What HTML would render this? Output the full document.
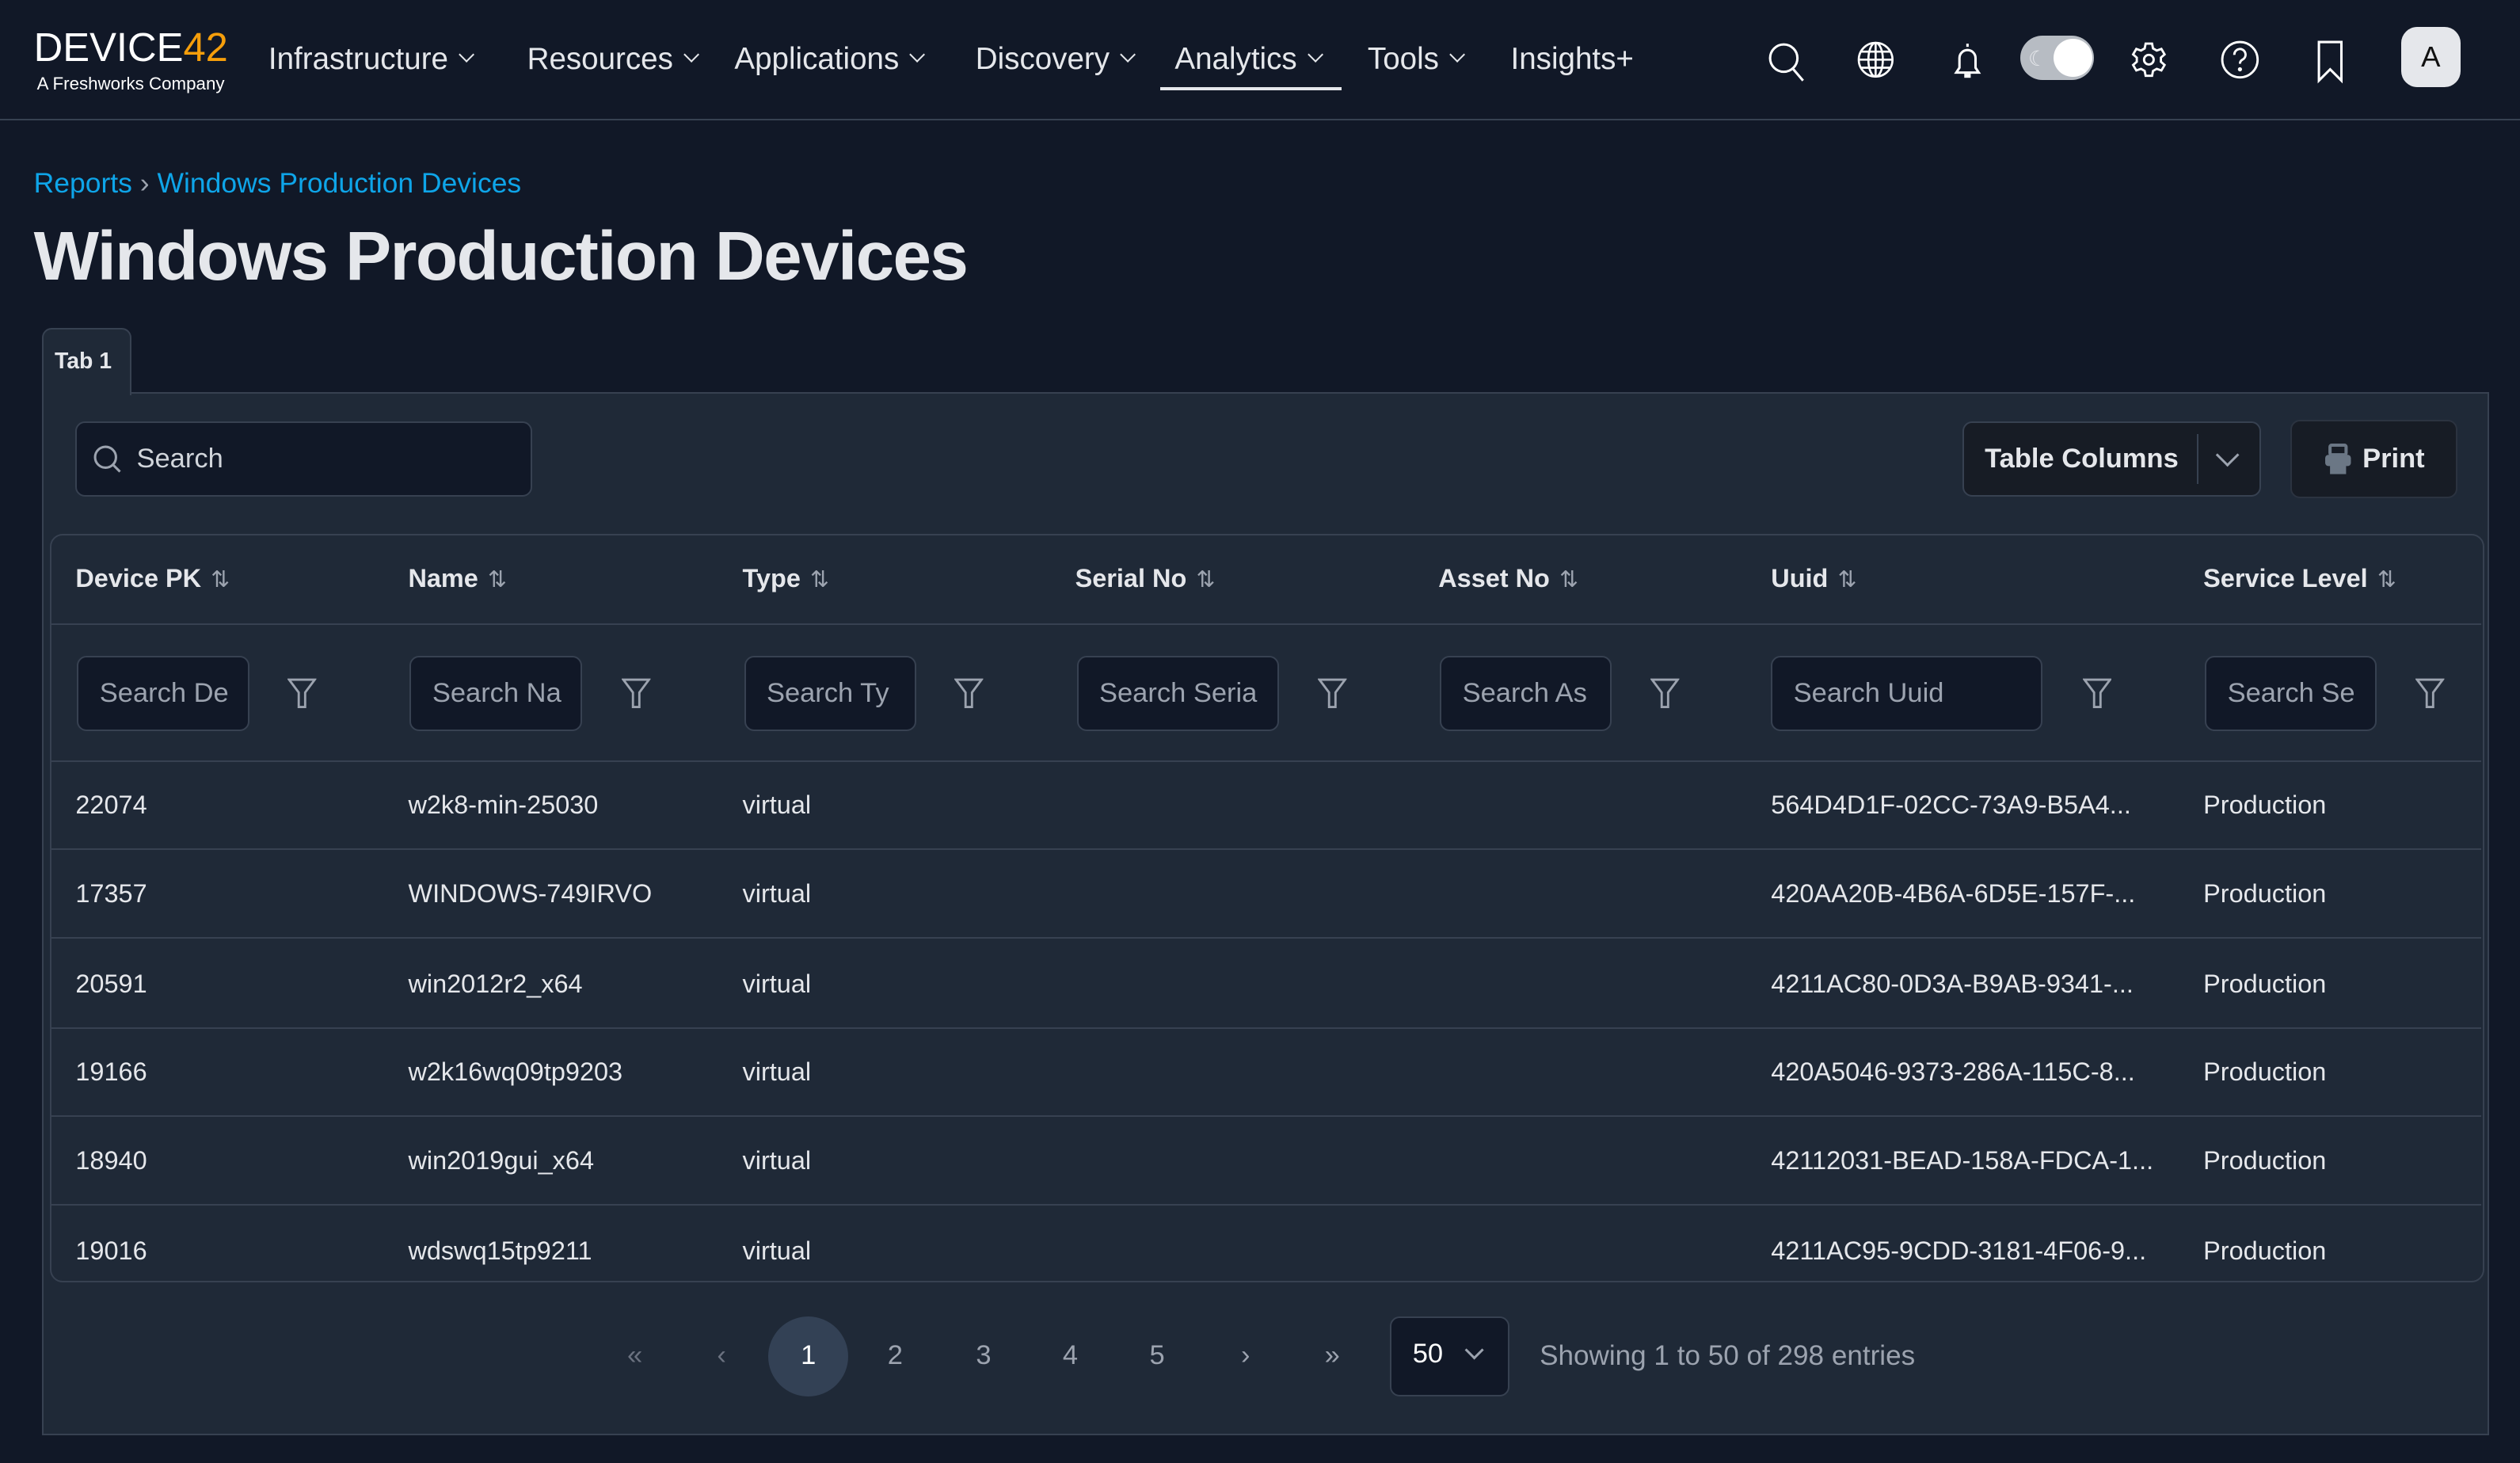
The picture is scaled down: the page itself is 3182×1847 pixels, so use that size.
<!DOCTYPE html>
<html><head><meta charset="utf-8">
<style>
html,body{margin:0;padding:0;background:#111827;overflow:hidden}
#w{zoom:2.0293;width:1568px;height:910px;position:relative;font-family:"Liberation Sans",sans-serif;color:#e5e7eb}
.a{position:absolute}
.nav{font-size:19px;color:#e5e7eb;top:26px;white-space:nowrap}
.chev{display:inline-block;width:6px;height:6px;border-right:1.4px solid #e5e7eb;border-bottom:1.4px solid #e5e7eb;transform:rotate(45deg);margin-left:8px;position:relative;top:-5px}
.inp{background:#111827;border:1px solid #374151;border-radius:6px;box-sizing:border-box}
.th{font-size:16px;font-weight:bold;color:#e5e7eb;top:351px}
.srt{font-weight:normal;color:#9ca3af;font-size:14px;margin-left:6px}
.fi{height:47px;top:408px;font-size:17px;color:#9ca3af;padding:13px 0 0 13px;overflow:hidden;white-space:nowrap}
.hl{left:32px;width:1512px;height:1px;background:#374151}
.td{font-size:16px;color:#e5e7eb;margin-top:1px}
.pg{font-size:17px;color:#9ca3af;top:834px;width:20px;text-align:center}
</style></head><body><div id="w">
<!-- header -->
<div class="a" style="left:21px;top:15px;font-size:25px;letter-spacing:0;color:#fff;font-weight:normal">DEVICE<span style="color:#f59e0b">42</span></div>
<div class="a" style="left:23px;top:46px;font-size:11px;color:#fff">A Freshworks Company</div>
<div class="a nav" style="left:167px">Infrastructure<span class="chev"></span></div>
<div class="a nav" style="left:328px">Resources<span class="chev"></span></div>
<div class="a nav" style="left:457px">Applications<span class="chev"></span></div>
<div class="a nav" style="left:607px">Discovery<span class="chev"></span></div>
<div class="a nav" style="left:731px">Analytics<span class="chev"></span></div>
<div class="a" style="left:722px;top:54px;width:113px;height:2px;background:#e5e7eb"></div>
<div class="a nav" style="left:851px">Tools<span class="chev"></span></div>
<div class="a nav" style="left:940px">Insights+</div>
<svg class="a" style="left:1098px;top:24px" width="28" height="28" viewBox="0 0 28 28" fill="none" stroke="#fff" stroke-width="1.5"><circle cx="12" cy="12" r="8.5"/><path d="M18 19l6 7"/></svg>
<svg class="a" style="left:1155px;top:25px" width="24" height="24" viewBox="0 0 24 24" fill="none" stroke="#fff" stroke-width="1.3"><circle cx="12" cy="12" r="10.5"/><ellipse cx="12" cy="12" rx="4.5" ry="10.5"/><path d="M1.5 12h21M3 7h18M3 17h18M12 1.5v21"/></svg>
<svg class="a" style="left:1212px;top:24px" width="24" height="28" viewBox="0 0 24 28" fill="none" stroke="#fff" stroke-width="1.5"><path d="M12 3v2M5 21h14l-2-3v-6a5 5 0 0 0-10 0v6z"/><path d="M10 23h4" stroke-width="2.5"/></svg>
<div class="a" style="left:1257px;top:22px;width:46px;height:28px;border-radius:14px;background:#b7bcc3"></div>
<div class="a" style="left:1278px;top:24px;width:24px;height:24px;border-radius:12px;background:#fff"></div>
<div class="a" style="left:1262px;top:29px;font-size:13px;color:#e5e7eb">☾</div>
<svg class="a" style="left:1325px;top:25px" width="24" height="24" viewBox="0 0 24 24" fill="none" stroke="#fff" stroke-width="1.4"><circle cx="12" cy="12" r="3"/><path d="M10 2h4l.6 3 2.3 1.3 2.9-1 2 3.4-2.3 2v2.6l2.3 2-2 3.4-2.9-1L14.6 19 14 22h-4l-.6-3-2.3-1.3-2.9 1-2-3.4 2.3-2v-2.6l-2.3-2 2-3.4 2.9 1L9.4 5z"/></svg>
<svg class="a" style="left:1381px;top:24px" width="26" height="26" viewBox="0 0 26 26" fill="none" stroke="#fff" stroke-width="1.4"><circle cx="13" cy="13" r="11"/><path d="M9.5 10a3.5 3.5 0 1 1 5 3c-1 .6-1.5 1.3-1.5 2.5"/><circle cx="13" cy="19" r=".6" fill="#fff"/></svg>
<svg class="a" style="left:1440px;top:24px" width="20" height="28" viewBox="0 0 20 28" fill="none" stroke="#fff" stroke-width="1.5"><path d="M3 2h14v24l-7-7-7 7z"/></svg>
<div class="a" style="left:1494px;top:17px;width:37px;height:37px;border-radius:10px;background:#e5e7eb;color:#111;font-size:18px;text-align:center;line-height:37px">A</div>
<div class="a" style="left:0;top:74px;width:1568px;height:1px;background:#374151"></div>
<!-- title -->
<div class="a" style="left:21px;top:104px;font-size:17.5px;color:#0ea5e9">Reports <span style="color:#9ca3af">›</span> Windows Production Devices</div>
<div class="a" style="left:21px;top:135px;font-size:43px;font-weight:bold;color:#e5e7eb;letter-spacing:-0.8px">Windows Production Devices</div>
<!-- panel -->
<div class="a" style="left:26px;top:244px;width:1521px;height:647px;background:#1f2937;border:1px solid #374151"></div>
<div class="a" style="left:26px;top:204px;width:56px;height:42px;background:#1f2937;border:1px solid #374151;border-bottom:none;border-radius:6px 6px 0 0;font-size:14px;font-weight:bold;padding:12px 0 0 7px;box-sizing:border-box">Tab 1</div>
<div class="a inp" style="left:47px;top:262px;width:284px;height:47px"></div>
<svg class="a" style="left:57px;top:276px" width="20" height="20" viewBox="0 0 20 20" fill="none" stroke="#9ca3af" stroke-width="1.5"><circle cx="8.5" cy="8.5" r="6.5"/><path d="M13.5 13.5l4 4"/></svg>
<div class="a" style="left:85px;top:276px;font-size:17px;color:#d1d5db">Search</div>
<div class="a" style="left:1221px;top:262px;width:186px;height:47px;background:#171c25;border:1px solid #374151;border-radius:6px;box-sizing:border-box"></div>
<div class="a" style="left:1235px;top:276px;font-size:17px;font-weight:bold;color:#e5e7eb">Table Columns</div>
<div class="a" style="left:1367px;top:270px;width:1px;height:31px;background:#374151"></div>
<div class="a" style="left:1381px;top:278px;width:9px;height:9px;border-right:1.5px solid #9ca3af;border-bottom:1.5px solid #9ca3af;transform:rotate(45deg)"></div>
<div class="a" style="left:1425px;top:261px;width:104px;height:49px;background:#171c25;border:1px solid #2b3340;border-radius:6px;box-sizing:border-box"></div>
<svg class="a" style="left:1446px;top:276px" width="18" height="20" viewBox="0 0 18 20" fill="#6b7785"><rect x="4" y="1" width="10" height="6" rx="1" fill="none" stroke="#6b7785" stroke-width="2"/><rect x="1" y="7" width="16" height="7" rx="2"/><rect x="4" y="12" width="10" height="7"/></svg>
<div class="a" style="left:1470px;top:276px;font-size:17px;font-weight:bold;color:#e5e7eb">Print</div>
<!-- table -->
<div class="a" style="left:31px;top:332px;width:1513px;height:464px;border:1px solid #374151;border-radius:8px"></div>
<div class="a th" style="left:47px">Device PK<span class="srt">⇅</span></div>
<div class="a th" style="left:254px">Name<span class="srt">⇅</span></div>
<div class="a th" style="left:462px">Type<span class="srt">⇅</span></div>
<div class="a th" style="left:669px">Serial No<span class="srt">⇅</span></div>
<div class="a th" style="left:895px">Asset No<span class="srt">⇅</span></div>
<div class="a th" style="left:1102px">Uuid<span class="srt">⇅</span></div>
<div class="a th" style="left:1371px">Service Level<span class="srt">⇅</span></div>
<div class="a hl" style="top:388px"></div>
<div class="a inp fi" style="left:48px;width:107px">Search De</div>
<div class="a inp fi" style="left:255px;width:107px">Search Na</div>
<div class="a inp fi" style="left:463px;width:107px">Search Ty</div>
<div class="a inp fi" style="left:670px;width:126px">Search Seria</div>
<div class="a inp fi" style="left:896px;width:107px">Search As</div>
<div class="a inp fi" style="left:1102px;width:169px">Search Uuid</div>
<div class="a inp fi" style="left:1372px;width:107px">Search Se</div>
<svg width="0" height="0" style="position:absolute"><defs><symbol id="f" viewBox="0 0 18 20"><path d="M1 1h16l-6 8v9H7V9z" fill="none" stroke="#9ca3af" stroke-width="1.4"/></symbol></defs></svg>
<svg class="a" style="left:179px;top:422px" width="18" height="20"><use href="#f"/></svg>
<svg class="a" style="left:387px;top:422px" width="18" height="20"><use href="#f"/></svg>
<svg class="a" style="left:594px;top:422px" width="18" height="20"><use href="#f"/></svg>
<svg class="a" style="left:820px;top:422px" width="18" height="20"><use href="#f"/></svg>
<svg class="a" style="left:1027px;top:422px" width="18" height="20"><use href="#f"/></svg>
<svg class="a" style="left:1296px;top:422px" width="18" height="20"><use href="#f"/></svg>
<svg class="a" style="left:1503px;top:422px" width="18" height="20"><use href="#f"/></svg>
<div class="a hl" style="top:473px"></div>
<div class="a hl" style="top:528px"></div>
<div class="a hl" style="top:583px"></div>
<div class="a hl" style="top:639px"></div>
<div class="a hl" style="top:694px"></div>
<div class="a hl" style="top:749px"></div>
<div class="a td" style="left:47px;top:491px">22074</div><div class="a td" style="left:254px;top:491px">w2k8-min-25030</div><div class="a td" style="left:462px;top:491px">virtual</div><div class="a td" style="left:1102px;top:491px">564D4D1F-02CC-73A9-B5A4...</div><div class="a td" style="left:1371px;top:491px">Production</div>
<div class="a td" style="left:47px;top:546px">17357</div><div class="a td" style="left:254px;top:546px">WINDOWS-749IRVO</div><div class="a td" style="left:462px;top:546px">virtual</div><div class="a td" style="left:1102px;top:546px">420AA20B-4B6A-6D5E-157F-...</div><div class="a td" style="left:1371px;top:546px">Production</div>
<div class="a td" style="left:47px;top:602px">20591</div><div class="a td" style="left:254px;top:602px">win2012r2_x64</div><div class="a td" style="left:462px;top:602px">virtual</div><div class="a td" style="left:1102px;top:602px">4211AC80-0D3A-B9AB-9341-...</div><div class="a td" style="left:1371px;top:602px">Production</div>
<div class="a td" style="left:47px;top:657px">19166</div><div class="a td" style="left:254px;top:657px">w2k16wq09tp9203</div><div class="a td" style="left:462px;top:657px">virtual</div><div class="a td" style="left:1102px;top:657px">420A5046-9373-286A-115C-8...</div><div class="a td" style="left:1371px;top:657px">Production</div>
<div class="a td" style="left:47px;top:712px">18940</div><div class="a td" style="left:254px;top:712px">win2019gui_x64</div><div class="a td" style="left:462px;top:712px">virtual</div><div class="a td" style="left:1102px;top:712px">42112031-BEAD-158A-FDCA-1...</div><div class="a td" style="left:1371px;top:712px">Production</div>
<div class="a td" style="left:47px;top:768px">19016</div><div class="a td" style="left:254px;top:768px">wdswq15tp9211</div><div class="a td" style="left:462px;top:768px">virtual</div><div class="a td" style="left:1102px;top:768px">4211AC95-9CDD-3181-4F06-9...</div><div class="a td" style="left:1371px;top:768px">Production</div>
<!-- pagination -->
<div class="a pg" style="left:385px;color:#6b7280">«</div>
<div class="a pg" style="left:439px;color:#6b7280">‹</div>
<div class="a" style="left:478px;top:819px;width:50px;height:50px;border-radius:25px;background:#334155"></div>
<div class="a pg" style="left:493px;color:#fff">1</div>
<div class="a pg" style="left:547px">2</div>
<div class="a pg" style="left:602px">3</div>
<div class="a pg" style="left:656px">4</div>
<div class="a pg" style="left:710px">5</div>
<div class="a pg" style="left:765px">›</div>
<div class="a pg" style="left:819px">»</div>
<div class="a inp" style="left:865px;top:819px;width:74px;height:50px"></div>
<div class="a" style="left:879px;top:833px;font-size:17px;color:#fff">50</div>
<div class="a" style="left:913px;top:836px;width:7px;height:7px;border-right:1.5px solid #9ca3af;border-bottom:1.5px solid #9ca3af;transform:rotate(45deg)"></div>
<div class="a" style="left:958px;top:834px;font-size:17.3px;color:#9ca3af">Showing 1 to 50 of 298 entries</div>
</div></body></html>
